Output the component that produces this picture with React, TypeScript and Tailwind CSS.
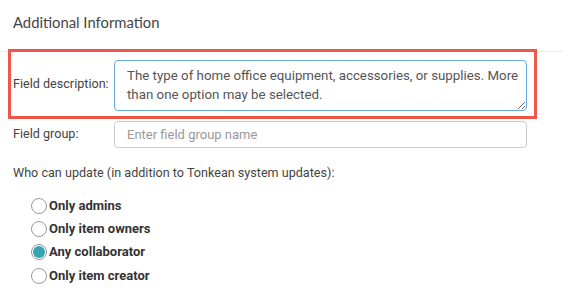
import React, { useState } from "react";

const opciones = ["Only admins", "Only item owners", "Any collaborator", "Only item creator"];

export default function App() {
  const [descripcion, setDescripcion] = useState(
    "The type of home office equipment, accessories, or supplies. More than one option may be selected. "
  );
  const [grupo, setGrupo] = useState("");
  const [quien, setQuien] = useState("Any collaborator");

  return (
    <div className="w-[577px] h-[303px] bg-white font-['Roboto',sans-serif] text-[12.6px] text-[#444]">
      <div className="w-[563px] h-[52px] border-b border-[#e8e8e8] pl-[13px] pt-[12px]">
        <h2 className="font-['Lato',sans-serif] text-[14.8px] leading-[20px] text-[#444]">Additional Information</h2>
      </div>

      <div className="ml-[8px] -mt-[3px] w-[529px] h-[70px] border-[3px] border-[#f0564a] flex items-center pl-[2px]">
        <label className="w-[101px] shrink-0 whitespace-nowrap text-[#444]">Field description:</label>
        <textarea
          value={descripcion}
          onChange={(e) => setDescripcion(e.target.value)}
          className="w-[413px] h-[51px] mt-[3px] border border-[#66a9e0] rounded-[4px] pl-[12px] pr-[4px] py-[5px] text-[13.3px] leading-[19px] text-[#555] resize-y outline-none overflow-hidden"
        />
      </div>

      <div className="flex items-center ml-[13px] mt-[2px]">
        <label className="w-[101px] shrink-0">Field group:</label>
        <input
          type="text"
          value={grupo}
          onChange={(e) => setGrupo(e.target.value)}
          placeholder="Enter field group name"
          className="w-[413px] h-[27px] border border-[#ccc] rounded-[4px] px-[12px] text-[13px] text-[#555] placeholder:text-[#999] outline-none"
        />
      </div>

      <p className="ml-[13px] mt-[15px] leading-[20px]">Who can update (in addition to Tonkean system updates):</p>

      <div className="ml-[31px] mt-[11px] flex flex-col">
        {opciones.map((op) => (
          <label key={op} className="flex items-center h-[23.3px] cursor-pointer">
            <span className="w-[16px] h-[16px] rounded-full border border-[#999] bg-white flex items-center justify-center">
              {quien === op && <span className="w-[12px] h-[12px] rounded-full bg-[#33a5b5]" />}
            </span>
            <input
              type="radio"
              name="quien"
              className="hidden"
              checked={quien === op}
              onChange={() => setQuien(op)}
            />
            <span className="ml-[2px] font-bold text-[13px] text-[#333]">{op}</span>
          </label>
        ))}
      </div>
    </div>
  );
}
